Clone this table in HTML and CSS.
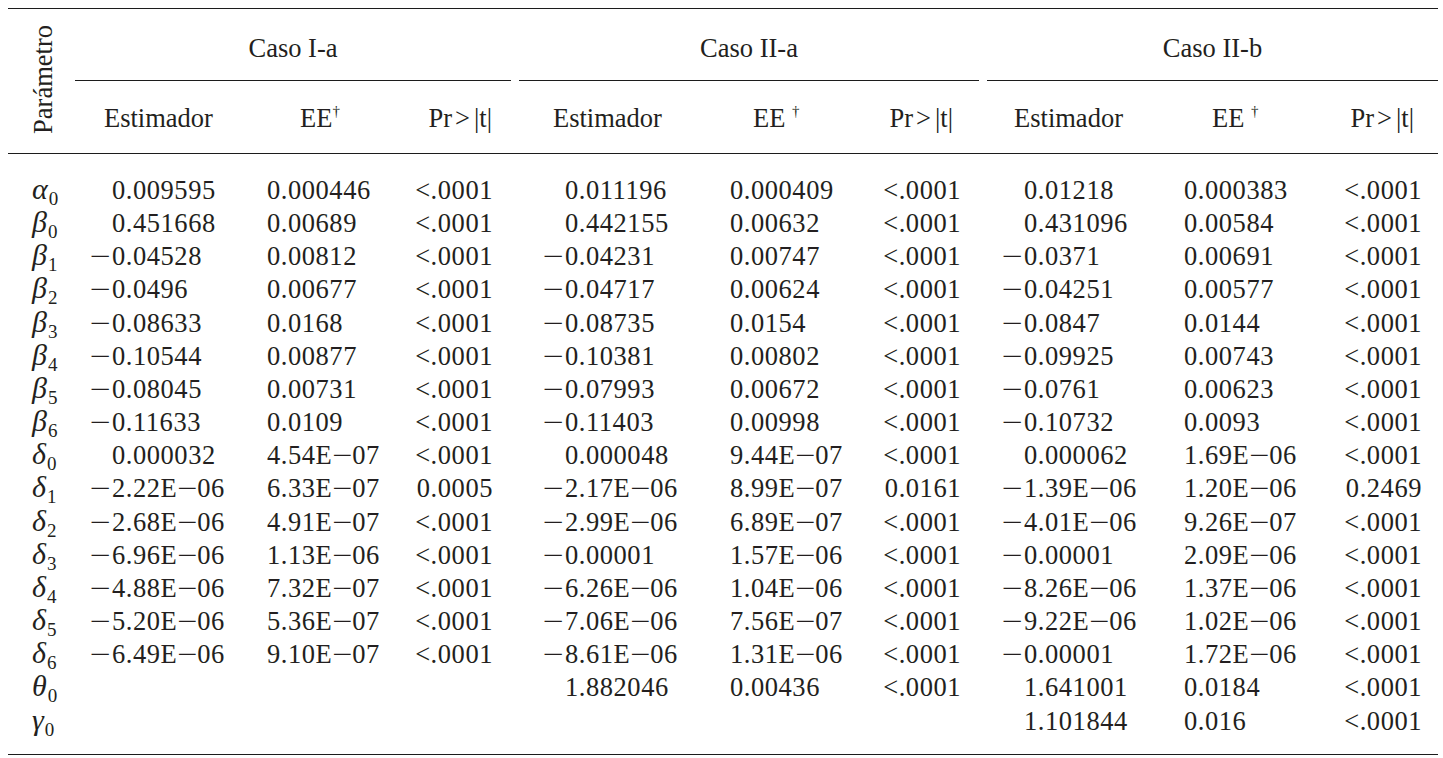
FILE: index.html
```html
<!DOCTYPE html>
<html lang="es">
<head>
<meta charset="utf-8">
<title>Estimadores de parámetros</title>
<link rel="stylesheet" href="styles.css">
</head>
<body>
<table class="results">
  <colgroup>
    <col class="w-sym">
    <col class="w-c1"><col class="w-c2"><col class="w-c3">
    <col class="w-c4"><col class="w-c5"><col class="w-c6">
    <col class="w-c7"><col class="w-c8"><col class="w-c9">
  </colgroup>
  <thead>
    <tr class="group-row">
      <th class="param" rowspan="2"><span class="vertical">Parámetro</span></th>
      <th class="group g1" colspan="3"><div class="group-label">Caso I-a</div></th>
      <th class="group g2" colspan="3"><div class="group-label">Caso II-a</div></th>
      <th class="group g3" colspan="3"><div class="group-label">Caso II-b</div></th>
    </tr>
    <tr class="sub-row">
      <th>Estimador</th><th>EE<sup>†</sup></th><th>Pr<span class="gt">&gt;</span>|t|</th>
      <th>Estimador</th><th>EE <sup>†</sup></th><th>Pr<span class="gt">&gt;</span>|t|</th>
      <th>Estimador</th><th>EE <sup>†</sup></th><th>Pr<span class="gt">&gt;</span>|t|</th>
    </tr>
  </thead>
  <tbody>
    <tr class="first">
      <td class="sym"><i>α</i><sub>0</sub></td>
      <td>0.009595</td><td>0.000446</td><td>&lt;.0001</td>
      <td>0.011196</td><td>0.000409</td><td>&lt;.0001</td>
      <td>0.01218</td><td>0.000383</td><td>&lt;.0001</td>
    </tr>
    <tr>
      <td class="sym"><i>β</i><sub>0</sub></td>
      <td>0.451668</td><td>0.00689</td><td>&lt;.0001</td>
      <td>0.442155</td><td>0.00632</td><td>&lt;.0001</td>
      <td>0.431096</td><td>0.00584</td><td>&lt;.0001</td>
    </tr>
    <tr>
      <td class="sym"><i>β</i><sub>1</sub></td>
      <td><span class="neg">−</span>0.04528</td><td>0.00812</td><td>&lt;.0001</td>
      <td><span class="neg">−</span>0.04231</td><td>0.00747</td><td>&lt;.0001</td>
      <td><span class="neg">−</span>0.0371</td><td>0.00691</td><td>&lt;.0001</td>
    </tr>
    <tr>
      <td class="sym"><i>β</i><sub>2</sub></td>
      <td><span class="neg">−</span>0.0496</td><td>0.00677</td><td>&lt;.0001</td>
      <td><span class="neg">−</span>0.04717</td><td>0.00624</td><td>&lt;.0001</td>
      <td><span class="neg">−</span>0.04251</td><td>0.00577</td><td>&lt;.0001</td>
    </tr>
    <tr>
      <td class="sym"><i>β</i><sub>3</sub></td>
      <td><span class="neg">−</span>0.08633</td><td>0.0168</td><td>&lt;.0001</td>
      <td><span class="neg">−</span>0.08735</td><td>0.0154</td><td>&lt;.0001</td>
      <td><span class="neg">−</span>0.0847</td><td>0.0144</td><td>&lt;.0001</td>
    </tr>
    <tr>
      <td class="sym"><i>β</i><sub>4</sub></td>
      <td><span class="neg">−</span>0.10544</td><td>0.00877</td><td>&lt;.0001</td>
      <td><span class="neg">−</span>0.10381</td><td>0.00802</td><td>&lt;.0001</td>
      <td><span class="neg">−</span>0.09925</td><td>0.00743</td><td>&lt;.0001</td>
    </tr>
    <tr>
      <td class="sym"><i>β</i><sub>5</sub></td>
      <td><span class="neg">−</span>0.08045</td><td>0.00731</td><td>&lt;.0001</td>
      <td><span class="neg">−</span>0.07993</td><td>0.00672</td><td>&lt;.0001</td>
      <td><span class="neg">−</span>0.0761</td><td>0.00623</td><td>&lt;.0001</td>
    </tr>
    <tr>
      <td class="sym"><i>β</i><sub>6</sub></td>
      <td><span class="neg">−</span>0.11633</td><td>0.0109</td><td>&lt;.0001</td>
      <td><span class="neg">−</span>0.11403</td><td>0.00998</td><td>&lt;.0001</td>
      <td><span class="neg">−</span>0.10732</td><td>0.0093</td><td>&lt;.0001</td>
    </tr>
    <tr>
      <td class="sym"><i>δ</i><sub>0</sub></td>
      <td>0.000032</td><td>4.54E<span class="em">−</span>07</td><td>&lt;.0001</td>
      <td>0.000048</td><td>9.44E<span class="em">−</span>07</td><td>&lt;.0001</td>
      <td>0.000062</td><td>1.69E<span class="em">−</span>06</td><td>&lt;.0001</td>
    </tr>
    <tr>
      <td class="sym"><i>δ</i><sub>1</sub></td>
      <td><span class="neg">−</span>2.22E<span class="em">−</span>06</td><td>6.33E<span class="em">−</span>07</td><td>0.0005</td>
      <td><span class="neg">−</span>2.17E<span class="em">−</span>06</td><td>8.99E<span class="em">−</span>07</td><td>0.0161</td>
      <td><span class="neg">−</span>1.39E<span class="em">−</span>06</td><td>1.20E<span class="em">−</span>06</td><td>0.2469</td>
    </tr>
    <tr>
      <td class="sym"><i>δ</i><sub>2</sub></td>
      <td><span class="neg">−</span>2.68E<span class="em">−</span>06</td><td>4.91E<span class="em">−</span>07</td><td>&lt;.0001</td>
      <td><span class="neg">−</span>2.99E<span class="em">−</span>06</td><td>6.89E<span class="em">−</span>07</td><td>&lt;.0001</td>
      <td><span class="neg">−</span>4.01E<span class="em">−</span>06</td><td>9.26E<span class="em">−</span>07</td><td>&lt;.0001</td>
    </tr>
    <tr>
      <td class="sym"><i>δ</i><sub>3</sub></td>
      <td><span class="neg">−</span>6.96E<span class="em">−</span>06</td><td>1.13E<span class="em">−</span>06</td><td>&lt;.0001</td>
      <td><span class="neg">−</span>0.00001</td><td>1.57E<span class="em">−</span>06</td><td>&lt;.0001</td>
      <td><span class="neg">−</span>0.00001</td><td>2.09E<span class="em">−</span>06</td><td>&lt;.0001</td>
    </tr>
    <tr>
      <td class="sym"><i>δ</i><sub>4</sub></td>
      <td><span class="neg">−</span>4.88E<span class="em">−</span>06</td><td>7.32E<span class="em">−</span>07</td><td>&lt;.0001</td>
      <td><span class="neg">−</span>6.26E<span class="em">−</span>06</td><td>1.04E<span class="em">−</span>06</td><td>&lt;.0001</td>
      <td><span class="neg">−</span>8.26E<span class="em">−</span>06</td><td>1.37E<span class="em">−</span>06</td><td>&lt;.0001</td>
    </tr>
    <tr>
      <td class="sym"><i>δ</i><sub>5</sub></td>
      <td><span class="neg">−</span>5.20E<span class="em">−</span>06</td><td>5.36E<span class="em">−</span>07</td><td>&lt;.0001</td>
      <td><span class="neg">−</span>7.06E<span class="em">−</span>06</td><td>7.56E<span class="em">−</span>07</td><td>&lt;.0001</td>
      <td><span class="neg">−</span>9.22E<span class="em">−</span>06</td><td>1.02E<span class="em">−</span>06</td><td>&lt;.0001</td>
    </tr>
    <tr>
      <td class="sym"><i>δ</i><sub>6</sub></td>
      <td><span class="neg">−</span>6.49E<span class="em">−</span>06</td><td>9.10E<span class="em">−</span>07</td><td>&lt;.0001</td>
      <td><span class="neg">−</span>8.61E<span class="em">−</span>06</td><td>1.31E<span class="em">−</span>06</td><td>&lt;.0001</td>
      <td><span class="neg">−</span>0.00001</td><td>1.72E<span class="em">−</span>06</td><td>&lt;.0001</td>
    </tr>
    <tr>
      <td class="sym"><i>θ</i><sub>0</sub></td>
      <td></td><td></td><td></td>
      <td>1.882046</td><td>0.00436</td><td>&lt;.0001</td>
      <td>1.641001</td><td>0.0184</td><td>&lt;.0001</td>
    </tr>
    <tr class="last">
      <td class="sym"><i>γ</i><sub>0</sub></td>
      <td></td><td></td><td></td>
      <td></td><td></td><td></td>
      <td>1.101844</td><td>0.016</td><td>&lt;.0001</td>
    </tr>
  </tbody>
</table>
</body>
</html>
```

FILE: styles.css
```css
html, body {
  margin: 0;
  padding: 0;
  background: #ffffff;
}

body {
  padding: 8px 0 0 8px;
  font-family: "Liberation Serif", "Times New Roman", serif;
  font-size: 26.5px;
  color: #231f20;
}

.results {
  border-collapse: collapse;
  table-layout: fixed;
  width: 1430px;
  border-top: 1px solid #1c1c1c;
  border-bottom: 1px solid #1c1c1c;
}

.w-sym { width: 67px; }
.w-c1 { width: 175px; }
.w-c2 { width: 150px; }
.w-c3 { width: 115px; }
.w-c4 { width: 200px; }
.w-c5 { width: 145px; }
.w-c6 { width: 123px; }
.w-c7 { width: 187px; }
.w-c8 { width: 150px; }
.w-c9 { width: 118px; }

th, td {
  padding: 0;
  font-weight: normal;
  white-space: nowrap;
}

/* Header */
.param {
  vertical-align: middle;
  text-align: left;
  border-bottom: 1px solid #1c1c1c;
  padding-left: 22px;
}

.vertical {
  display: inline-block;
  writing-mode: vertical-rl;
  transform: rotate(180deg);
  line-height: 26px;
  margin-top: 4px;
}

.group-row {
  height: 72px;
}

.group {
  vertical-align: bottom;
}

.group-label {
  height: 70px;
  line-height: 74px;
  text-align: center;
  border-bottom: 1px solid #1c1c1c;
  box-sizing: border-box;
}

.g1 { padding-right: 4px; }
.g2 { padding: 0 4px; }
.g3 { padding-left: 4px; }

.sub-row {
  height: 73px;
}

.sub-row th {
  border-bottom: 1px solid #1c1c1c;
  vertical-align: middle;
  text-align: left;
  padding-top: 3px;
}

.sub-row th:nth-child(1) { padding-left: 29px; }
.sub-row th:nth-child(2) { padding-left: 50px; }
.sub-row th:nth-child(3) { text-align: right; padding-right: 23px; }
.sub-row th:nth-child(4) { padding-left: 38px; }
.sub-row th:nth-child(5) { padding-left: 38px; }
.sub-row th:nth-child(6) { text-align: right; padding-right: 30px; }
.sub-row th:nth-child(7) { padding-left: 31px; }
.sub-row th:nth-child(8) { padding-left: 42px; }
.sub-row th:nth-child(9) { text-align: right; padding-right: 24px; }

.gt {
  margin: 0 4px 0 3px;
}

sup {
  font-size: 15px;
  vertical-align: 11px;
  line-height: 0;
}

/* Body */
tbody td {
  height: 33.15px;
  line-height: 33.15px;
  vertical-align: middle;
  letter-spacing: 0.55px;
}

tbody tr.first td {
  padding-top: 20px;
}

tbody tr.last td {
  padding-bottom: 16px;
}

td.sym {
  padding-left: 24px;
  letter-spacing: 0;
}

.sym i {
  font-size: 30px;
  font-style: italic;
  line-height: 0;
}

.sym sub {
  font-size: 19px;
  vertical-align: -6px;
  line-height: 0;
  margin-left: 1px;
}

.neg {
  display: inline-block;
  width: 22px;
  margin-left: -22px;
  text-align: left;
  letter-spacing: 0;
  transform: scaleX(1.4);
  transform-origin: 0 50%;
}

.em {
  display: inline-block;
  letter-spacing: 0;
  margin: 0 2px 0 3px;
  transform: scaleX(1.35);
  transform-origin: 50% 50%;
}

tbody td:nth-child(2) { padding-left: 37px; }
tbody td:nth-child(3) { padding-left: 17px; }
tbody td:nth-child(4) { text-align: right; padding-right: 22px; }
tbody td:nth-child(5) { padding-left: 50px; }
tbody td:nth-child(6) { padding-left: 15px; }
tbody td:nth-child(7) { text-align: right; padding-right: 22px; }
tbody td:nth-child(8) { padding-left: 41px; }
tbody td:nth-child(9) { padding-left: 14px; }
tbody td:nth-child(10) { text-align: right; padding-right: 16px; }
```
